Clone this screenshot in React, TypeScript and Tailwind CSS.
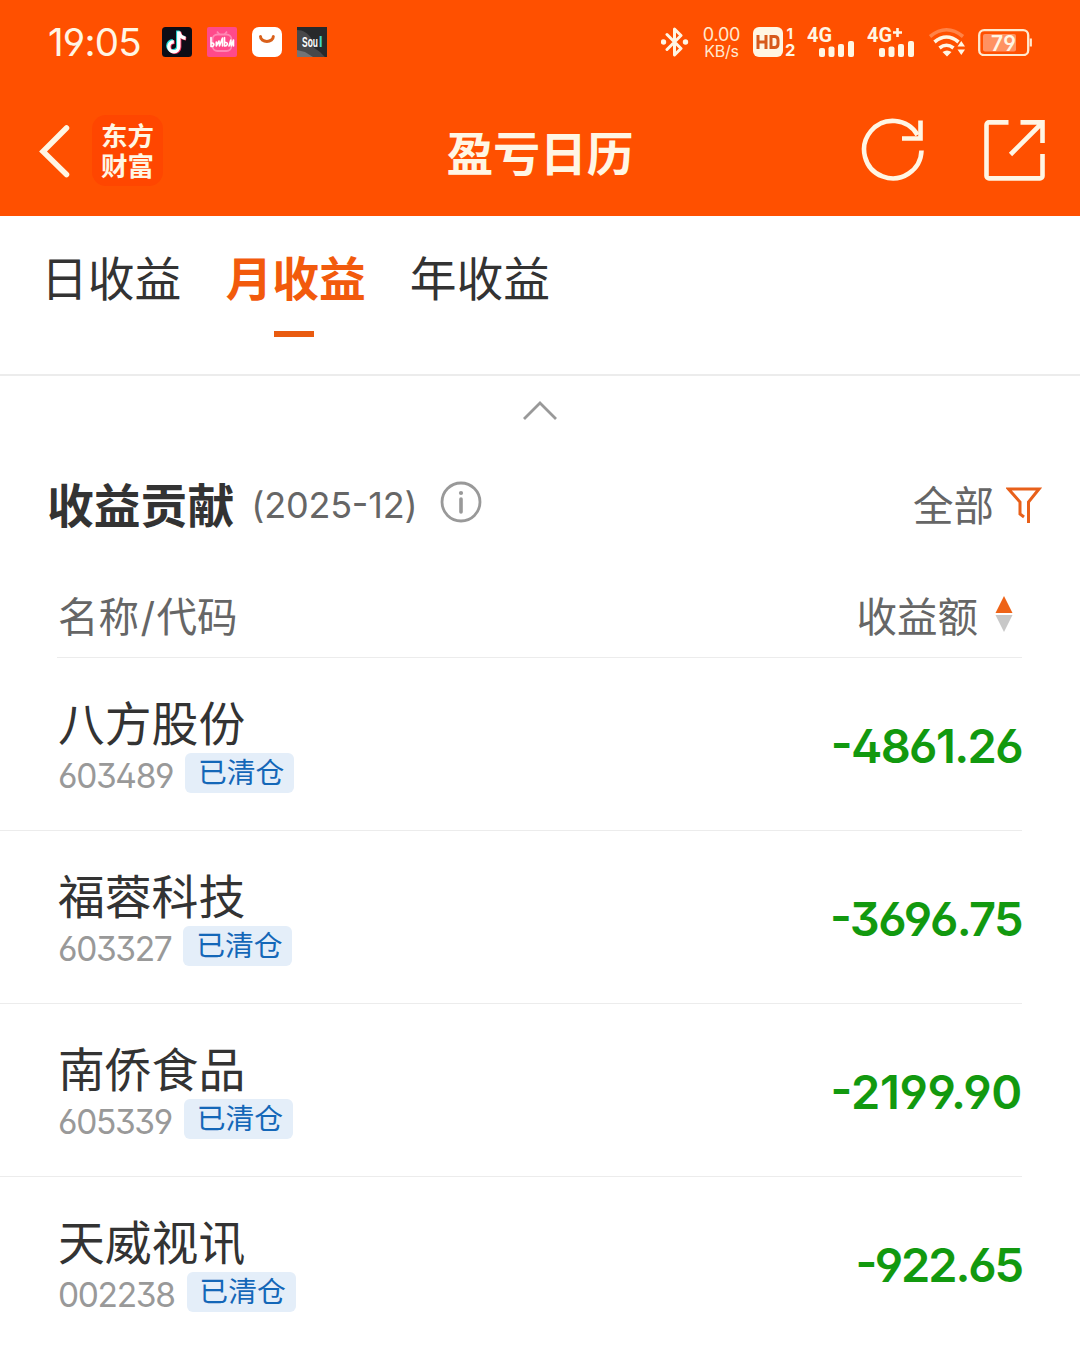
import type { ReactNode } from "react";

const CREAM = "#fff6e4";

function AppIcons() {
  return (
    <div className="flex gap-[15px]">
      <svg width="30" height="30" viewBox="0 0 30 30">
        <rect width="30" height="30" rx="3.500" fill="#0d0d16" />
        <g fill="none" strokeWidth="3.400">
          <path d="M17 4v15.200a5 5 0 1 1-5-5M17 4c.5 4 3 6.400 6.500 6.800" stroke="#25e0dc" transform="translate(-1.200 -.4)" />
          <path d="M17.700 5v15.200a5 5 0 1 1-5-5M17.700 5c.5 4 3 6.400 6.500 6.800" stroke="#f4305c" />
          <path d="M16.800 4.400v15.400a5 5 0 1 1-5-5M16.800 4.400c.5 4 3 6.400 6.800 6.800" stroke="#fff" />
        </g>
      </svg>
      <svg width="30" height="30" viewBox="0 0 30 30">
        <rect width="30" height="30" rx="2" fill="#ff4a8b" />
        <g fill="none" stroke="#ff86b3" strokeWidth="1.800">
          <rect x="5.500" y="7.500" width="19" height="16.500" rx="5" />
          <path d="M10 4.500l2.500 3M20 4.500l-2.500 3" />
        </g>
        <g fill="none" stroke="#fff" strokeWidth="1.600" strokeLinecap="round" strokeLinejoin="round">
          <path d="M4 10.500v9c3.500.5 4-4 .5-3.500M9.300 15v4l2.700-5 .5 5 3-8v8M17.500 10.500v8.500c3 .5 4-4 1-3.500M22 19l1.800-6 .5 6 2.200-6v6" />
        </g>
      </svg>
      <svg width="30" height="30" viewBox="0 0 30 30">
        <rect width="30" height="30" rx="7" fill="#fff" />
        <path d="M8.500 9.500a6.400 5 0 0 0 12.800 0" fill="none" stroke="#d9601b" strokeWidth="3" strokeLinecap="round" />
      </svg>
      <svg width="30" height="30" viewBox="0 0 30 30">
        <rect width="30" height="30" fill="#28292b" />
        <path d="M0 3c6 0 11 3 14 8l2 9 7 5 5 5H0z" fill="#48484a" />
        <path d="M0 23l8 2 8 5H0z" fill="#737375" />
        <g fontSize="14" fontWeight="700" fontFamily="Liberation Sans, sans-serif">
          <text x="5" y="20" fill="#fff" textLength="16" lengthAdjust="spacingAndGlyphs">Sou</text>
          <text x="21.800" y="20" fill="#43d8c9">l</text>
        </g>
      </svg>
    </div>
  );
}

function Signal({ plus }: { plus?: boolean }) {
  return (
    <svg width="50" height="34" viewBox="0 0 50 34" fill={CREAM}>
      <text x="0" y="16.500" fontSize="19.500" fontWeight="700" fontFamily="Roboto, sans-serif" textLength="25" lengthAdjust="spacingAndGlyphs">
        4G
      </text>
      {plus && <path d="M26 7.500h9M30.500 3v9" stroke={CREAM} strokeWidth="2.600" />}
      <rect x="12" y="23" width="6" height="9" rx="2" />
      <rect x="21.500" y="21.500" width="6" height="10.500" rx="2" />
      <rect x="31" y="19" width="6" height="13" rx="2" />
      <rect x="41" y="16" width="6" height="16" rx="2" />
    </svg>
  );
}

function StatusBar() {
  return (
    <div className="flex h-[84px] items-center pl-[48px]">
      <div className="w-[114px] text-[38.500px] leading-none tracking-[-0.800px] text-[#fff6e4]">19:05</div>
      <AppIcons />
      <div className="ml-auto flex items-center pr-[48px]">
        <svg className="mr-[13px]" width="28" height="30" viewBox="0 0 28 30" fill="none" stroke={CREAM} strokeWidth="3" strokeLinejoin="round" strokeLinecap="round">
          <path d="M6 7.500l14 14-6.500 6.500V2L20 8.500l-14 14" />
          <circle cx="2.500" cy="15" r="1.200" fill={CREAM} />
          <circle cx="24.500" cy="15" r="1.200" fill={CREAM} />
        </svg>
        <div className="mr-[12px] flex w-[39px] flex-col items-center pt-px text-[#ffe9cf]">
          <span className="text-[18px] leading-[17px] tracking-[-0.200px]">0.00</span>
          <span className="text-[16px] leading-[17px] tracking-[-0.200px]">KB/s</span>
        </div>
        <svg className="mr-[10px] overflow-visible" width="44" height="32" viewBox="0 0 44 32" fill={CREAM}>
          <rect x="0" y="1" width="30" height="30" rx="6" />
          <path d="M5 9v14M13 9v14M5 16h8M18 10.500h3.500q3.500 0 3.500 3.500v4q0 3.500-3.500 3.500H18z" fill="none" stroke="#d75a1c" strokeWidth="3" />
          <text x="33.500" y="12.500" fontSize="15" fontWeight="700">1</text>
          <text x="32" y="30" fontSize="16.500" fontWeight="700">2</text>
        </svg>
        <Signal />
        <span className="w-[10px]" />
        <Signal plus />
        <svg className="ml-[12px] mr-[13px]" width="36" height="30" viewBox="0 0 36 30">
          <g fill="none" strokeWidth="3.600">
            <path d="M1 9.500Q17.500-4 34 9.500" stroke="#ff8347" />
            <path d="M5.500 15q12-10 24 0" stroke={CREAM} />
            <path d="M10.500 21q7-5.500 14 0" stroke={CREAM} />
          </g>
          <path d="M13.500 25q4.500-3 9 0L18 29.500zM28.500 19.500l3.800-5.500 3.700 5.500zM28.500 22.500h7.500l-3.700 5.500z" fill={CREAM} />
        </svg>
        <svg width="54" height="28" viewBox="0 0 54 28">
          <rect x="1.200" y="2.200" width="49" height="25" rx="5" fill="none" stroke="#ffe9cf" strokeWidth="2.300" />
          <rect x="5" y="6" width="33" height="17.500" rx="2" fill="#ff9262" />
          <path d="M52.800 10.500v8" stroke="#ffe9cf" strokeWidth="2.200" />
          <text x="13" y="22.500" fontSize="21" fontWeight="600" fill="#fff6e4" textLength="25">79</text>
        </svg>
      </div>
    </div>
  );
}

function NavBar() {
  return (
    <div className="grid h-[132px] grid-cols-[1fr_auto_1fr] items-start">
      <div className="flex items-start pl-[38px] pt-[31px]">
        <svg className="mt-[9px]" width="34" height="54" viewBox="0 0 34 54" fill="none" stroke={CREAM} strokeWidth="5.500" strokeLinecap="round">
          <path d="M28.500 4L5 27.500l23.500 23" />
        </svg>
        <div className="ml-[20px] flex h-[71px] w-[71px] flex-col items-center justify-center rounded-[14px] bg-[#ff4600] pt-px text-[26.500px] font-bold leading-[30px] text-[#fff6e4]">
          <span>东方</span>
          <span>财富</span>
        </div>
      </div>
      <h1 className="pt-[35px] text-[46.800px] font-bold leading-[70px] text-[#fff6e4]">盈亏日历</h1>
      <div className="flex justify-end gap-[58px] pr-[34px] pt-[34px]">
        <svg width="64" height="64" viewBox="0 0 64 64" fill="none" stroke={CREAM} strokeWidth="4.600">
          <path d="M61.500 32.500A28.700 28.700 0 1 1 57.500 17" />
          <path d="M60.500 2.500v18H42" />
        </svg>
        <svg width="64" height="64" viewBox="0 0 64 64" fill="none" stroke={CREAM} strokeWidth="4.600">
          <path d="M26.500 4.400H7a2.500 2.500 0 0 0-2.500 2.500v51a2.500 2.500 0 0 0 2.500 2.500h51a2.500 2.500 0 0 0 2.500-2.500V36" />
          <path d="M38.500 4.400H60.500V25M59.500 5.500L28.500 36.500" />
        </svg>
      </div>
    </div>
  );
}

function Tab({ children, active }: { children: ReactNode; active?: boolean }) {
  return (
    <div className={active ? "flex flex-col items-center font-bold text-[#f25a0c]" : "flex flex-col items-center text-[#333333]"}>
      <span className="text-[46.800px] leading-[60px]">{children}</span>
      {active && <span className="mr-[3px] mt-[22px] h-[6px] w-[40px] bg-[#e95b10]" />}
    </div>
  );
}

const holdings = [
  { name: "八方股份", code: "603489", profit: "-4861.26", tracking: "tracking-[-1.600px]" },
  { name: "福蓉科技", code: "603327", profit: "-3696.75", tracking: "tracking-[-1.600px]" },
  { name: "南侨食品", code: "605339", profit: "-2199.90", tracking: "tracking-[-0.300px]" },
  { name: "天威视讯", code: "002238", profit: "-922.65", tracking: "tracking-[-2.100px]" },
];

export default function App() {
  return (
    <div className="h-[1348px] w-[1080px] overflow-hidden bg-white font-['Inter','Noto_Sans_CJK_SC',sans-serif] [font-feature-settings:'ss01']">
      <header className="bg-[#ff5000]">
        <StatusBar />
        <NavBar />
      </header>

      <nav className="flex h-[160px] gap-[44px] border-b-2 border-[#ececec] pl-[41px] pt-[33px]">
        <Tab>日收益</Tab>
        <Tab active>月收益</Tab>
        <Tab>年收益</Tab>
      </nav>

      <div className="flex h-[72px] justify-center pt-[24px]">
        <svg width="36" height="22" viewBox="0 0 36 22" fill="none" stroke="#999" strokeWidth="2.800">
          <path d="M2 19L18 3l16 16" />
        </svg>
      </div>

      <section className="flex h-[114px] items-center pl-[47px] pr-[38px]">
        <h2 className="pt-[2px] text-[46.800px] font-bold leading-[60px] text-[#333]">收益贡献</h2>
        <span className="ml-[17px] text-[36px] tracking-[-0.200px] text-[#666]">
          (<span className="[font-feature-settings:'ss01','case']">2025-12</span>)
        </span>
        <svg className="-mt-[6px] ml-[23px]" width="42" height="42" viewBox="0 0 42 42" fill="none" stroke="#999">
          <circle cx="21" cy="21" r="19" strokeWidth="2.800" />
          <path d="M21 18v13" strokeWidth="3.600" strokeLinecap="round" />
          <circle cx="21" cy="12" r="2.100" fill="#999" stroke="none" />
        </svg>
        <span className="ml-auto pt-[3px] text-[40.500px] leading-[60px] text-[#666]">全部</span>
        <svg className="ml-[12px]" width="36" height="38" viewBox="0 0 36 38" fill="none" stroke="#e8601a" strokeWidth="3">
          <path d="M22.500 37V16L33 3H2.500L14 16v12l4 3" />
        </svg>
      </section>

      <div className="ml-[57px] mr-[58px] flex h-[96px] items-center border-b border-[#ececec] pt-[14px] text-[40.500px] text-[#666]">
        <span className="ml-px pt-[3px]">名称<span className="mx-[1.500px]">/</span>代码</span>
        <span className="ml-auto pt-[3px]">收益额</span>
        <svg className="-mt-[5px] ml-[17px] mr-[9px]" width="18" height="36" viewBox="0 0 18 36">
          <path d="M9 0l8.500 17H.5z" fill="#ee6317" />
          <path d="M9 36L.5 19h17z" fill="#c8c8c8" />
        </svg>
      </div>

      <ul>
        {holdings.map((h) => (
          <li key={h.code} className="mr-[58px] flex h-[173px] items-center border-b border-[#ececec] pb-[2px] pl-[58px]">
            <div className="flex flex-col">
              <span className="text-[46.800px] leading-[60px] text-[#333]">{h.name}</span>
              <div className="-mt-px flex h-[40px] items-center">
                <span className="pt-[7px] text-[33.500px] leading-[40px] tracking-[-1.350px] text-[#999]">{h.code}</span>
                <span className="ml-[12px] flex h-[40px] w-[109px] items-center justify-center rounded-[6px] bg-[#e4eef9] pl-[3px] text-[28.800px] leading-[40px] text-[#1467b8]">已清仓</span>
              </div>
            </div>
            <span className="ml-auto pt-[7px] text-[47px] font-semibold text-[#12990f] [font-feature-settings:'ss01','case']">
              <span className={h.tracking}>{h.profit}</span>
            </span>
          </li>
        ))}
      </ul>
    </div>
  );
}
